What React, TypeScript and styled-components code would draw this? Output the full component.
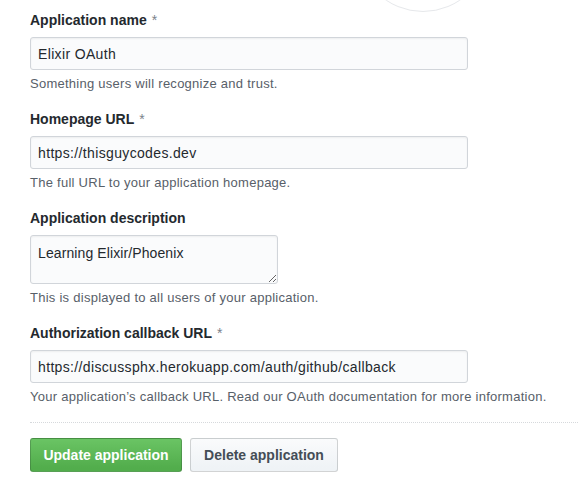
import React from "react";
import styled, { createGlobalStyle } from "styled-components";

const Global = createGlobalStyle`
  html, body { margin: 0; padding: 0; background: #fff; overflow: hidden; }
  body { font-family: "Liberation Sans", Arial, sans-serif; color: #24292e; }
  * { box-sizing: border-box; }
`;

const Page = styled.div`
  position: relative;
  width: 578px;
  height: 497px;
  padding: 10px 0 0 30px;
  overflow: hidden;
`;

const AvatarRing = styled.div`
  position: absolute;
  top: -120px;
  left: 357px;
  width: 132px;
  height: 132px;
  border-radius: 50%;
  border: 1.5px solid #e6e8eb;
`;

const Form = styled.form`
  display: flex;
  flex-direction: column;
`;

const Group = styled.div`
  display: flex;
  flex-direction: column;
  margin-bottom: 15px;
`;

const Label = styled.label`
  font-size: 14px;
  font-weight: 700;
  line-height: 20px;
  margin-bottom: 7px;
  color: #24292e;
`;

const Required = styled.span`
  color: #7a828a;
  font-weight: 400;
  margin-left: 5px;
`;

const Input = styled.input<{ $w: number }>`
  width: ${(p) => p.$w}px;
  height: 33px;
  padding: 0 7px;
  font-family: "Liberation Sans", Arial, sans-serif;
  font-size: 14px;
  letter-spacing: 0.35px;
  color: #24292e;
  background: #fafbfc;
  border: 1px solid #d1d5da;
  border-radius: 3px;
  box-shadow: inset 0 1px 2px rgba(27, 31, 35, 0.06);
  outline: none;
`;

const TextArea = styled.textarea<{ $w: number }>`
  width: ${(p) => p.$w}px;
  height: 49px;
  padding: 8px 7px;
  font-family: "Liberation Sans", Arial, sans-serif;
  font-size: 14px;
  line-height: 18px;
  letter-spacing: 0.1px;
  color: #24292e;
  background: #fafbfc;
  border: 1px solid #d1d5da;
  border-radius: 3px;
  box-shadow: inset 0 1px 2px rgba(27, 31, 35, 0.06);
  outline: none;
  resize: both;
`;

const Note = styled.p`
  margin: 4px 0 0;
  font-size: 13px;
  line-height: 20px;
  letter-spacing: 0.26px;
  color: #586069;
  white-space: nowrap;
`;

const Divider = styled.hr`
  margin: 0 0 15px;
  width: 560px;
  border: 0;
  border-top: 1px dotted #d6d9dc;
  height: 0;
`;

const Actions = styled.div`
  display: flex;
  gap: 8px;
`;

const Button = styled.button<{ $primary?: boolean; $w: number }>`
  width: ${(p) => p.$w}px;
  height: 34px;
  padding: 0;
  font-family: "Liberation Sans", Arial, sans-serif;
  font-size: 14px;
  font-weight: 700;
  border-radius: 3px;
  cursor: pointer;
  color: ${(p) => (p.$primary ? "#fff" : "#444d56")};
  background: ${(p) =>
    p.$primary
      ? "linear-gradient(180deg, #6ac464 0%, #52ad4c 90%)"
      : "linear-gradient(180deg, #fafbfc 0%, #eff3f6 90%)"};
  border: 1px solid ${(p) => (p.$primary ? "rgba(27,31,35,0.22)" : "rgba(27,31,35,0.18)")};
`;

export default function App() {
  return (
    <Page>
      <Global />
      <AvatarRing />
      <Form onSubmit={(e) => e.preventDefault()}>
        <Group>
          <Label>
            Application name<Required>*</Required>
          </Label>
          <Input $w={438} defaultValue="Elixir OAuth" />
          <Note>Something users will recognize and trust.</Note>
        </Group>
        <Group>
          <Label>
            Homepage URL<Required>*</Required>
          </Label>
          <Input $w={438} defaultValue="https://thisguycodes.dev" />
          <Note>The full URL to your application homepage.</Note>
        </Group>
        <Group>
          <Label>Application description</Label>
          <TextArea $w={248} defaultValue="Learning Elixir/Phoenix" />
          <Note>This is displayed to all users of your application.</Note>
        </Group>
        <Group>
          <Label>
            Authorization callback URL<Required>*</Required>
          </Label>
          <Input
            $w={438}
            defaultValue="https://discussphx.herokuapp.com/auth/github/callback"
          />
          <Note>
            Your application’s callback URL. Read our OAuth documentation for more
            information.
          </Note>
        </Group>
        <Divider />
        <Actions>
          <Button type="button" $primary $w={152}>
            Update application
          </Button>
          <Button type="button" $w={148}>
            Delete application
          </Button>
        </Actions>
      </Form>
    </Page>
  );
}
